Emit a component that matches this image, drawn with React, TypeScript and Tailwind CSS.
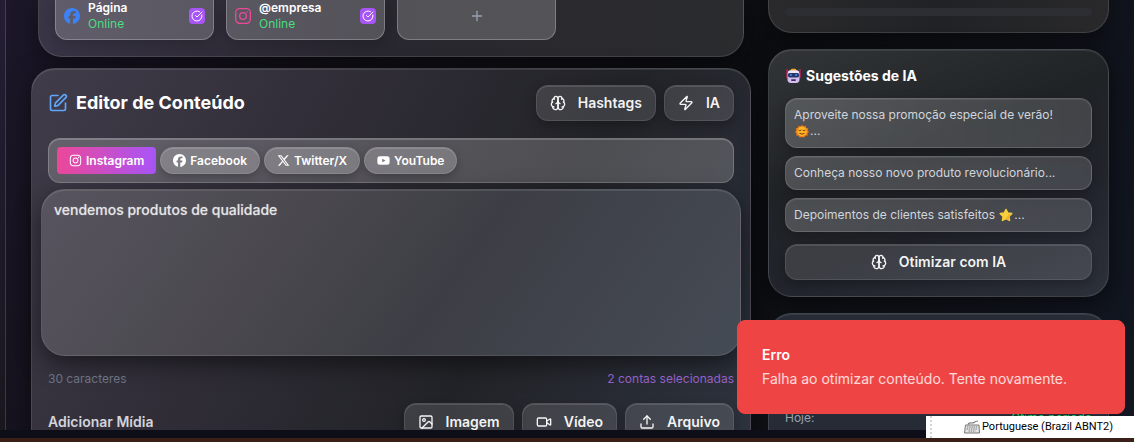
import type { ReactNode } from "react";
import { CircleCheckBig, Image, Plus, SquarePen, Upload, Video, Zap } from "lucide-react";
import { FaInstagram, FaYoutube } from "react-icons/fa";
import { FaFacebook, FaXTwitter } from "react-icons/fa6";

const glassButton =
  "flex items-center rounded-xl border border-white/10 bg-white/12 font-semibold text-white/95 shadow-[0_4px_12px_rgba(0,0,0,0.25),inset_0_1px_0_rgba(255,255,255,0.12)]";

function Brain({ className }: { className?: string }) {
  return (
    <svg viewBox="0 0 24 24" fill="none" stroke="currentColor" strokeWidth="2" strokeLinecap="round" strokeLinejoin="round" className={className} aria-hidden="true">
      <path d="M12 5a3 3 0 1 0-5.997.125 4 4 0 0 0-2.526 5.77 4 4 0 0 0 .556 6.588A4 4 0 1 0 12 18Z" />
      <path d="M12 5a3 3 0 1 1 5.997.125 4 4 0 0 1 2.526 5.77 4 4 0 0 1-.556 6.588A4 4 0 1 1 12 18Z" />
      <path d="M15 13a4.5 4.5 0 0 1-3-4 4.5 4.5 0 0 1-3 4" />
      <path d="M17.599 6.5a3 3 0 0 0 .399-1.375M6.003 5.125A3 3 0 0 0 6.401 6.5M3.477 10.896a4 4 0 0 1 .585-.396M19.938 10.5a4 4 0 0 1 .585.396M6 18a4 4 0 0 1-1.967-.516M19.967 17.484A4 4 0 0 1 18 18" />
    </svg>
  );
}

function InstagramOutline({ className }: { className?: string }) {
  return (
    <svg viewBox="0 0 24 24" fill="none" stroke="currentColor" strokeWidth="2" className={className} aria-hidden="true">
      <rect x="1" y="1" width="22" height="22" rx="6" />
      <circle cx="12" cy="12" r="5" />
      <circle cx="18" cy="6" r="1" fill="currentColor" stroke="none" />
    </svg>
  );
}

function Robot({ className }: { className?: string }) {
  return (
    <svg viewBox="0 0 16 16" className={className} role="img" aria-label="Robô">
      <path d="M2 1v9M15 1v9" stroke="#d6245e" strokeWidth="1.2" />
      <rect x="5.5" y="0.8" width="6" height="3" rx="1.5" fill="#f5a623" />
      <rect x="2.500" y="2.6" width="12" height="12.4" rx="3.4" fill="#d3bdec" />
      <rect x="3.100" y="2.6" width="10.8" height="3" rx="1.5" fill="#efe6fa" />
      <rect x="2.900" y="5" width="11.2" height="4.4" rx="2" fill="#26366b" />
      <circle cx="5.900" cy="7.1" r="1" fill="#4f8fe0" />
      <circle cx="11.100" cy="7.1" r="1" fill="#4f8fe0" />
      <rect x="6" y="11.3" width="5" height="1.600" rx="0.8" fill="#3b2c63" />
    </svg>
  );
}

function SunFace({ className }: { className?: string }) {
  return (
    <svg viewBox="0 0 16 16" className={className} role="img" aria-label="Sol">
      <path d="M8 2l1.500 1.300 2-.6.7 2 2 .7-.5 2L15 9l-1.500 1.500.1 2-2.100.2-1.200 1.800L8 14l-2.300.5-1.200-1.800-2.100-.2.1-2L1 9l1.300-1.600-.5-2 2-.7.7-2 2 .6z" fill="#f07c14" />
      <circle cx="8" cy="8.500" r="4.700" fill="#fbb52a" />
      <path d="M4.800 7.300q1 .9 2.200 0M9 7.300q1.200.9 2.200 0M5.800 10.500q2.200 1.600 4.400 0" fill="none" stroke="#7a3d0c" strokeWidth="1" strokeLinecap="round" />
    </svg>
  );
}

function Star({ className }: { className?: string }) {
  return (
    <svg viewBox="0 0 16 16" className={className} role="img" aria-label="Estrela">
      <path d="M8 2.500l1.700 3.600 4 .5-2.900 2.800.7 4L8 11.500l-3.500 1.900.7-4L2.300 6.600l4-.5z" fill="#f7cf3d" stroke="#f7cf3d" strokeWidth="1.600" strokeLinejoin="round" />
      <path d="M8 11.500l3.500 1.900-.7-4 2.900-2.800-3 1z" fill="#eeb422" />
    </svg>
  );
}

function Keyboard({ className }: { className?: string }) {
  return (
    <svg viewBox="0 0 16 14" fill="none" stroke="#777" className={className} aria-hidden="true">
      <path d="M4 4.500C5 1.500 8 4 10 2.500S12 1 14 1" strokeWidth="1.200" />
      <path d="M1.500 5h13.500L15.500 13H0.500z" fill="#e4e4e4" />
      <path d="M3 7h11M2.600 9h11M4.500 11h7" strokeDasharray="1.400 0.800" strokeWidth="1.200" />
    </svg>
  );
}

function Account({ icon, name }: { icon: ReactNode; name: string }) {
  return (
    <div className="flex h-10 items-center justify-between rounded-b-xl border border-t-0 border-white/25 bg-white/20 px-2 pb-2 shadow-[0_4px_16px_rgba(0,0,0,0.2)]">
      <div className="flex items-center gap-2">
        {icon}
        <div className="text-xs leading-4">
          <p className="font-semibold text-white">{name}</p>
          <p className="text-[#4ade80]">Online</p>
        </div>
      </div>
      <button aria-label={`Selecionar ${name}`} className="grid size-4 place-items-center rounded-sm bg-[#a855f7] text-white">
        <CircleCheckBig className="size-3" />
      </button>
    </div>
  );
}

function Tab({ icon, label, active }: { icon: ReactNode; label: string; active?: boolean }) {
  return (
    <button
      role="tab"
      aria-selected={!!active}
      className={
        active
          ? "flex h-[27px] items-center gap-1 rounded-sm bg-[linear-gradient(90deg,#ec4899,#a855f7)] px-3 text-xs font-semibold text-white"
          : "flex h-[27px] items-center gap-1 rounded-full border border-white/10 bg-white/22 px-3 text-xs font-semibold text-white shadow-[0_3px_8px_rgba(0,0,0,0.25),inset_0_1px_0_rgba(255,255,255,0.15)]"
      }
    >
      {icon}
      {label}
    </button>
  );
}

function Suggestion({ children }: { children: ReactNode }) {
  return (
    <button className="block w-full rounded-xl border border-white/15 bg-linear-to-r from-white/20 to-white/15 px-2 py-2 text-left text-xs leading-4 text-gray-300 shadow-[0_4px_12px_rgba(0,0,0,0.25),inset_0_1px_0_rgba(255,255,255,0.08)]">
      {children}
    </button>
  );
}

export default function App() {
  return (
    <div className="relative flex h-screen flex-col overflow-hidden bg-[#0e0e18] font-['Inter',sans-serif]">
      <div className="flex min-h-0 flex-1 overflow-hidden bg-[linear-gradient(115deg,#1c1729_0%,#131119_25%,#0d0e11_60%,#121722_100%)]">
        <aside className="w-[6px] shrink-0 border-r border-white/15 bg-linear-to-b from-[#241d35] to-[#19181f]" />
        <main className="ml-[25px] mr-[25px] grid min-w-0 flex-1 grid-cols-[minmax(0,720fr)_minmax(0,341fr)] items-start gap-[17px]">
          <div>
            <section className="mx-[7px] rounded-b-3xl border border-t-0 border-white/12 bg-linear-to-r from-[#3a3547] via-[#29272f] to-[#2b2c2e] px-4 pb-4 shadow-[0_8px_24px_rgba(0,0,0,0.4)]">
              <div className="grid grid-cols-4 gap-3">
                <Account icon={<FaFacebook className="size-4 text-[#3b82f6]" />} name="Página" />
                <Account icon={<InstagramOutline className="size-4 text-[#ec4899]" />} name="@empresa" />
                <button aria-label="Adicionar conta" className="flex h-10 items-center justify-center rounded-b-xl border border-t-0 border-white/25 bg-white/20 pb-2 text-gray-400">
                  <Plus className="size-4" />
                </button>
              </div>
            </section>

            <section className="mt-[11px] rounded-t-3xl border border-white/12 bg-[linear-gradient(120deg,#403c4a_0%,#302d37_35%,#222328_65%,#2d333e_100%)] px-4 pt-4 shadow-[0_8px_24px_rgba(0,0,0,0.5),inset_0_1px_0_rgba(255,255,255,0.1)]">
              <div className="flex items-center justify-between">
                <h2 className="flex items-center gap-2 text-lg leading-7 font-bold text-white">
                  <SquarePen className="size-5 text-[#60a5fa]" />
                  Editor de Conteúdo
                </h2>
                <div className="flex gap-2">
                  <button className={`${glassButton} h-9 gap-3 px-[13px] text-sm`}>
                    <Brain className="size-4" />
                    Hashtags
                  </button>
                  <button className={`${glassButton} h-9 gap-3 px-[13px] text-sm`}>
                    <Zap className="size-4" />
                    IA
                  </button>
                </div>
              </div>

              <div role="tablist" aria-label="Plataformas" className="mt-[17px] flex gap-1 rounded-xl border border-white/20 bg-white/20 p-2 shadow-[inset_0_1px_0_rgba(255,255,255,0.2)]">
                <Tab active icon={<FaInstagram className="size-[13px]" />} label="Instagram" />
                <Tab icon={<FaFacebook className="size-[13px]" />} label="Facebook" />
                <Tab icon={<FaXTwitter className="size-[13px]" />} label="Twitter/X" />
                <Tab icon={<FaYoutube className="size-[13px]" />} label="YouTube" />
              </div>

              <div className="-mx-[7px] mt-[6px] flex">
                <textarea
                  aria-label="Conteúdo"
                  defaultValue="vendemos produtos de qualidade"
                  className="h-[167px] w-full resize-none rounded-3xl border border-white/10 bg-[linear-gradient(125deg,#57545f_0%,#4b494f_32%,#3d3e45_58%,#454b55_100%)] px-3 py-2 text-sm leading-6 font-medium text-white/75 shadow-[0_8px_24px_rgba(0,0,0,0.5),inset_0_1px_0_rgba(255,255,255,0.1)] outline-none [text-shadow:0_0_1px_rgba(255,255,255,0.5)]"
                />
              </div>

              <div className="mt-[15px] flex justify-between text-xs leading-4">
                <span className="text-gray-500">30 caracteres</span>
                <span className="text-[#9560c4]">2 contas selecionadas</span>
              </div>

              <div className="mt-4 flex items-center justify-between">
                <h3 className="text-sm font-semibold text-gray-300">Adicionar Mídia</h3>
                <div className="flex gap-2">
                  <button className={`${glassButton} h-[37px] gap-3 px-[13px] text-sm`}>
                    <Image className="size-4" />
                    Imagem
                  </button>
                  <button className={`${glassButton} h-[37px] gap-3 px-[13px] text-sm`}>
                    <Video className="size-4" />
                    Vídeo
                  </button>
                  <button className={`${glassButton} h-[37px] gap-3 px-[13px] text-sm`}>
                    <Upload className="size-4" />
                    Arquivo
                  </button>
                </div>
              </div>
            </section>
          </div>

          <div className="space-y-4">
            <section className="rounded-b-3xl border border-t-0 border-white/12 bg-linear-to-r from-[#2a2a2c] via-[#212225] to-[#29292b] px-4 pt-2 pb-4 shadow-[0_8px_24px_rgba(0,0,0,0.4)]">
              <div className="h-2 rounded-full bg-[#2c2e34]" />
            </section>

            <section className="rounded-3xl border border-white/12 bg-[linear-gradient(160deg,#323538_0%,#202326_40%,#21242b_65%,#2d313b_100%)] p-4 shadow-[0_8px_24px_rgba(0,0,0,0.5),inset_0_1px_0_rgba(255,255,255,0.08)]">
              <h3 className="flex items-center gap-[5px] text-sm font-bold text-white">
                <Robot className="size-4" />
                Sugestões de IA
              </h3>
              <div className="mt-3 space-y-2">
                <Suggestion>
                  Aproveite nossa promoção especial de verão!
                  <br />
                  <SunFace className="inline size-4 align-top" />...
                </Suggestion>
                <Suggestion>Conheça nosso novo produto revolucionário...</Suggestion>
                <Suggestion>
                  Depoimentos de clientes satisfeitos <Star className="inline size-4 align-top" />...
                </Suggestion>
              </div>
              <button className={`${glassButton} mt-3 h-9 w-full justify-center gap-3 text-sm`}>
                <Brain className="size-4" />
                Otimizar com IA
              </button>
            </section>

            <section className="rounded-t-3xl border border-white/12 bg-[#262b35] px-4 pt-24 shadow-[inset_0_1px_0_rgba(255,255,255,0.08)]">
              <div className="flex justify-between text-xs leading-4">
                <span className="text-gray-400">Hoje:</span>
                <span className="text-[#22c55e]">Ótimo período</span>
              </div>
              <div className="h-10" />
            </section>
          </div>
        </main>
      </div>
      <footer className="h-3 shrink-0 border-b-4 border-[#3b2019]" />

      <div role="alert" className="absolute right-[9px] bottom-7 w-[388px] rounded-lg border border-[#ef4444] bg-[#ef4444] p-6 text-sm text-white">
        <p className="font-semibold">Erro</p>
        <p className="mt-1 text-white/80">Falha ao otimizar conteúdo. Tente novamente.</p>
      </div>

      <div className="absolute right-0 bottom-1 flex h-[22px] w-[208px] items-center bg-white text-[11px] text-black">
        <span className="ml-1 h-full border-l-2 border-dotted border-gray-300" />
        <Keyboard className="ml-8 h-4 w-4" />
        <span className="ml-[2px] font-['Roboto',sans-serif] whitespace-nowrap">Portuguese (Brazil ABNT2)</span>
      </div>
    </div>
  );
}
